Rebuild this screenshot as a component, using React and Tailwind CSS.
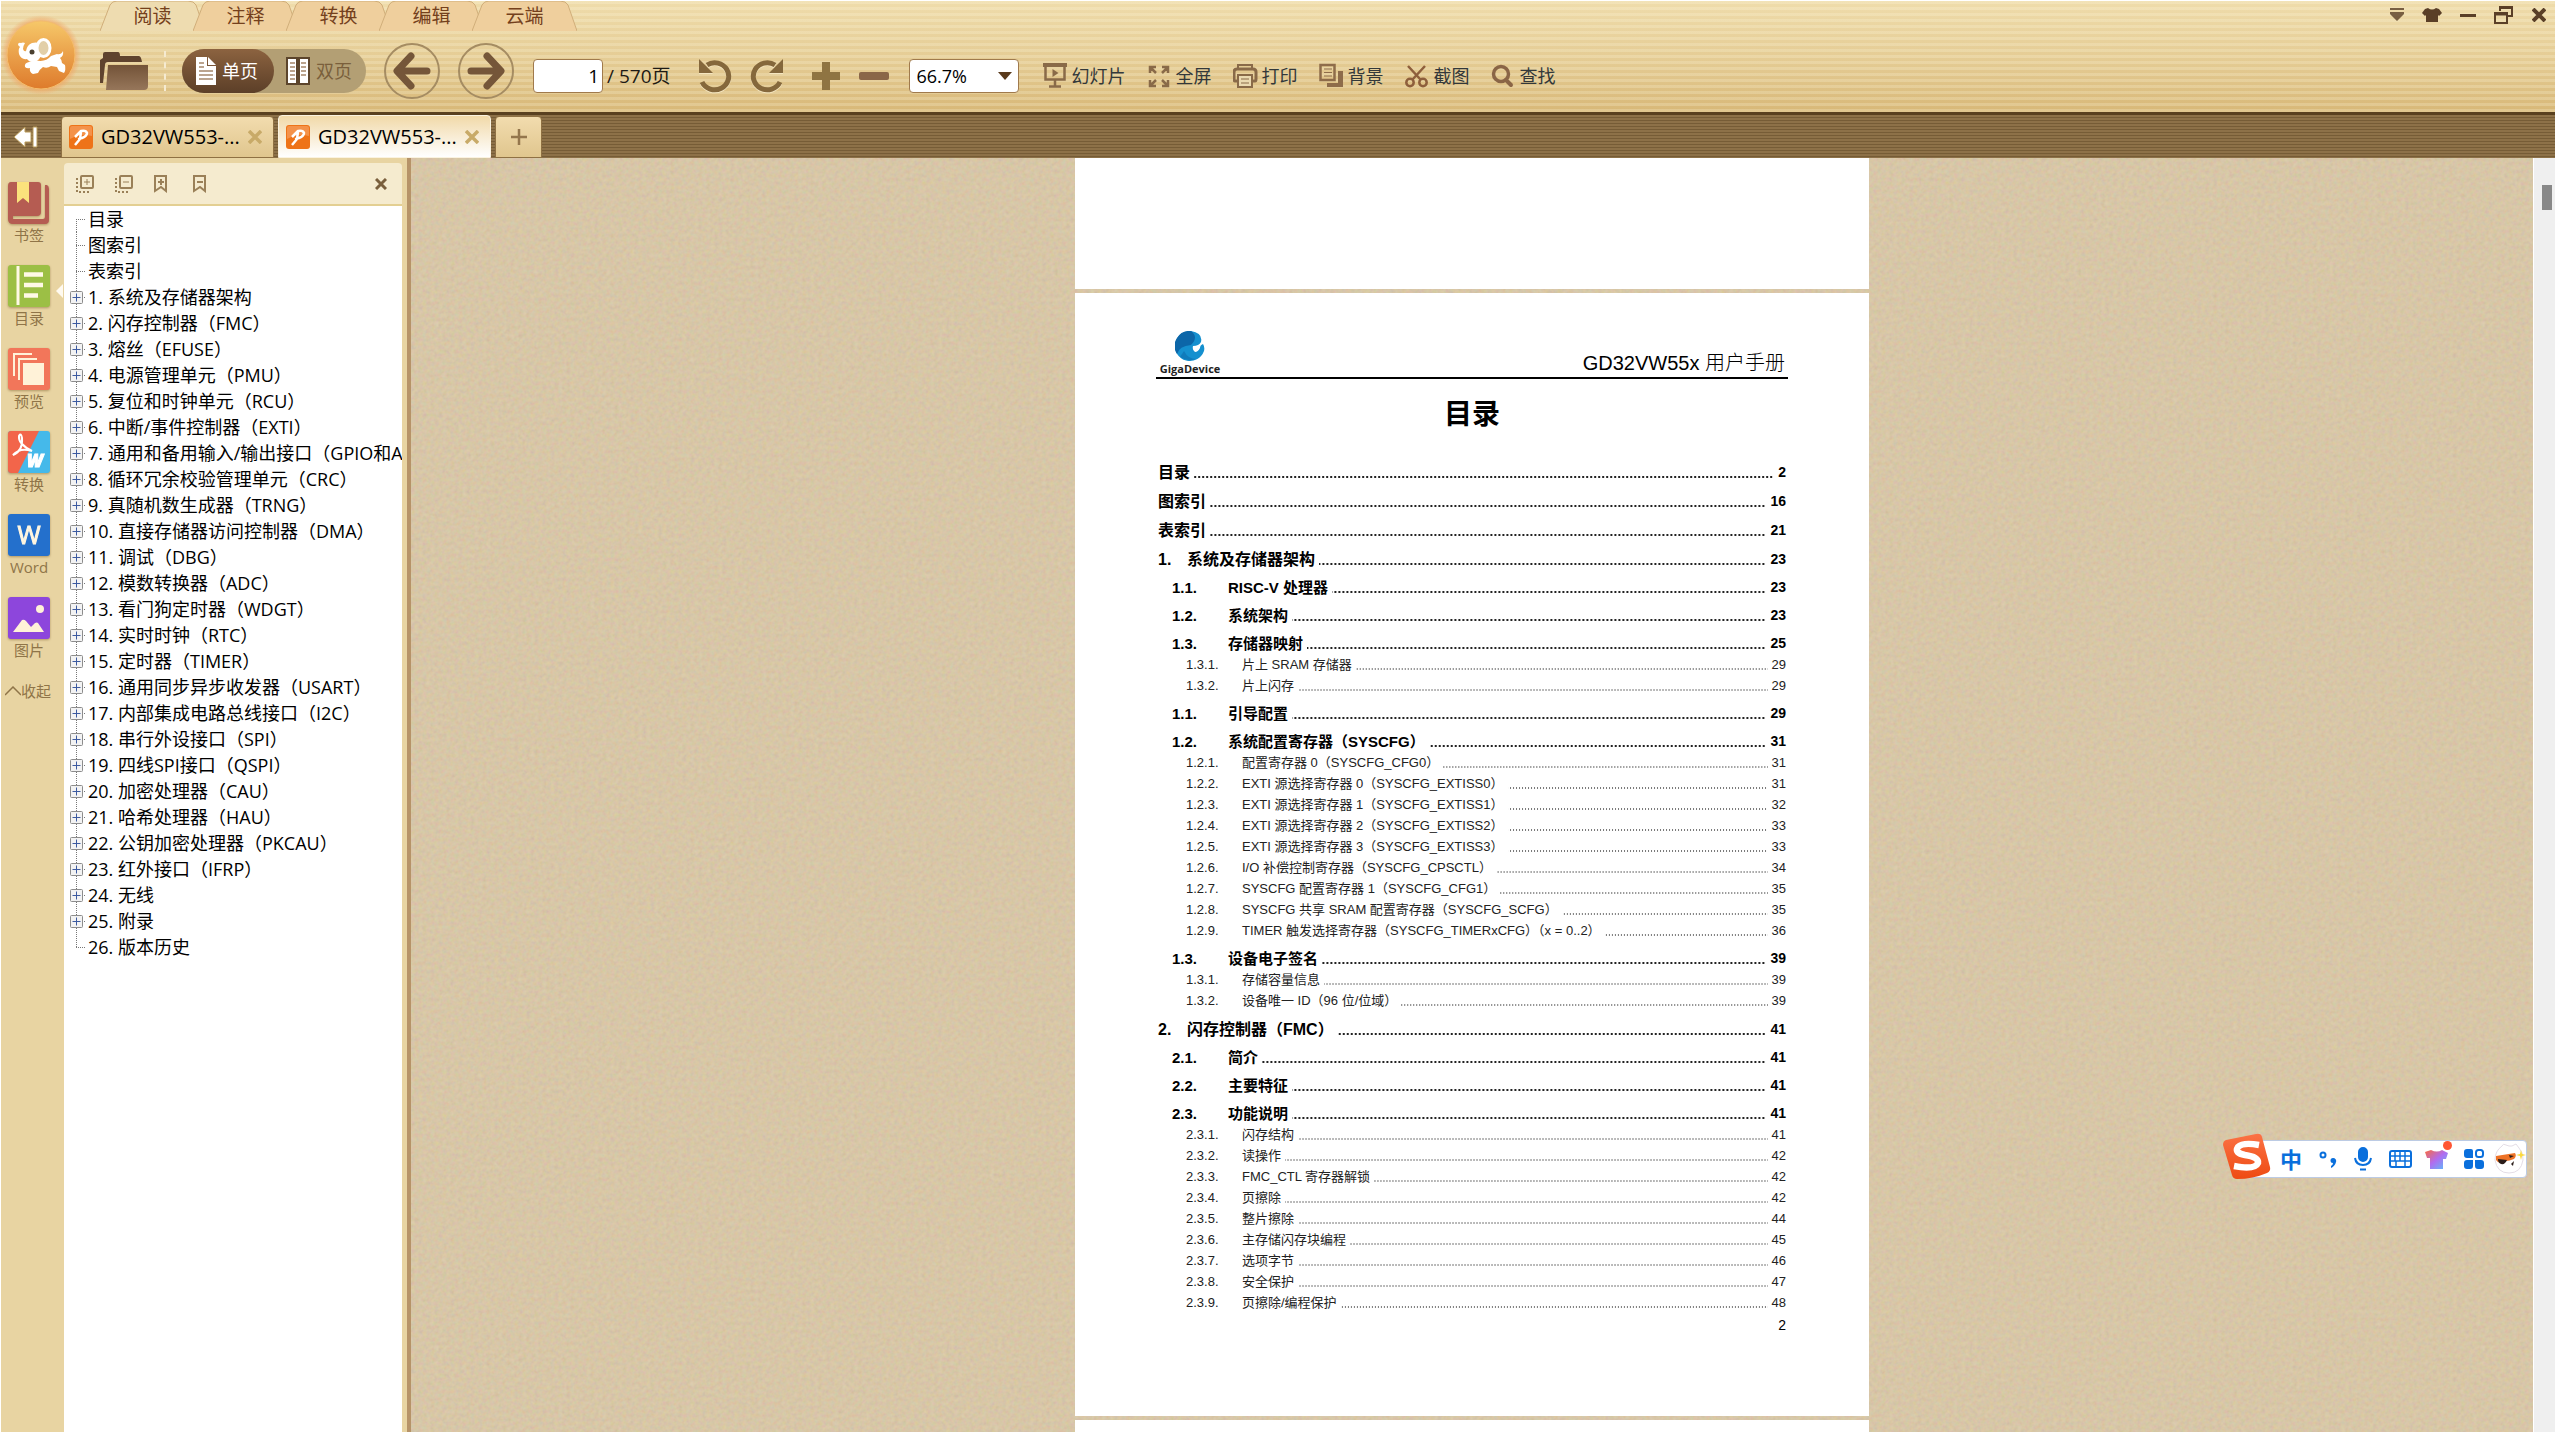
import clsx from 'clsx'

const ribbonTabs = ['阅读', '注释', '转换', '编辑', '云端']

const fileTabs = [
  { title: 'GD32VW553-...', active: false },
  { title: 'GD32VW553-...', active: true },
]

const outline = [
  '目录',
  '图索引',
  '表索引',
  '1. 系统及存储器架构',
  '2. 闪存控制器（FMC）',
  '3. 熔丝（EFUSE）',
  '4. 电源管理单元（PMU）',
  '5. 复位和时钟单元（RCU）',
  '6. 中断/事件控制器（EXTI）',
  '7. 通用和备用输入/输出接口（GPIO和A',
  '8. 循环冗余校验管理单元（CRC）',
  '9. 真随机数生成器（TRNG）',
  '10. 直接存储器访问控制器（DMA）',
  '11. 调试（DBG）',
  '12. 模数转换器（ADC）',
  '13. 看门狗定时器（WDGT）',
  '14. 实时时钟（RTC）',
  '15. 定时器（TIMER）',
  '16. 通用同步异步收发器（USART）',
  '17. 内部集成电路总线接口（I2C）',
  '18. 串行外设接口（SPI）',
  '19. 四线SPI接口（QSPI）',
  '20. 加密处理器（CAU）',
  '21. 哈希处理器（HAU）',
  '22. 公钥加密处理器（PKCAU）',
  '23. 红外接口（IFRP）',
  '24. 无线',
  '25. 附录',
  '26. 版本历史',
]

// [level, number, title, page]
const toc = [
  [1, '', '目录', 2],
  [1, '', '图索引', 16],
  [1, '', '表索引', 21],
  [1, '1.', '系统及存储器架构', 23],
  [2, '1.1.', 'RISC-V 处理器', 23],
  [2, '1.2.', '系统架构', 23],
  [2, '1.3.', '存储器映射', 25],
  [3, '1.3.1.', '片上 SRAM 存储器', 29],
  [3, '1.3.2.', '片上闪存', 29],
  [2, '1.1.', '引导配置', 29],
  [2, '1.2.', '系统配置寄存器（SYSCFG）', 31],
  [3, '1.2.1.', '配置寄存器 0（SYSCFG_CFG0）', 31],
  [3, '1.2.2.', 'EXTI 源选择寄存器 0（SYSCFG_EXTISS0）', 31],
  [3, '1.2.3.', 'EXTI 源选择寄存器 1（SYSCFG_EXTISS1）', 32],
  [3, '1.2.4.', 'EXTI 源选择寄存器 2（SYSCFG_EXTISS2）', 33],
  [3, '1.2.5.', 'EXTI 源选择寄存器 3（SYSCFG_EXTISS3）', 33],
  [3, '1.2.6.', 'I/O 补偿控制寄存器（SYSCFG_CPSCTL）', 34],
  [3, '1.2.7.', 'SYSCFG 配置寄存器 1（SYSCFG_CFG1）', 35],
  [3, '1.2.8.', 'SYSCFG 共享 SRAM 配置寄存器（SYSCFG_SCFG）', 35],
  [3, '1.2.9.', 'TIMER 触发选择寄存器（SYSCFG_TIMERxCFG）（x = 0..2）', 36],
  [2, '1.3.', '设备电子签名', 39],
  [3, '1.3.1.', '存储容量信息', 39],
  [3, '1.3.2.', '设备唯一 ID（96 位/位域）', 39],
  [1, '2.', '闪存控制器（FMC）', 41],
  [2, '2.1.', '简介', 41],
  [2, '2.2.', '主要特征', 41],
  [2, '2.3.', '功能说明', 41],
  [3, '2.3.1.', '闪存结构', 41],
  [3, '2.3.2.', '读操作', 42],
  [3, '2.3.3.', 'FMC_CTL 寄存器解锁', 42],
  [3, '2.3.4.', '页擦除', 42],
  [3, '2.3.5.', '整片擦除', 44],
  [3, '2.3.6.', '主存储闪存块编程', 45],
  [3, '2.3.7.', '选项字节', 46],
  [3, '2.3.8.', '安全保护', 47],
  [3, '2.3.9.', '页擦除/编程保护', 48],
]

function ElephantLogo() {
  return (
    <svg viewBox="0 0 80 80" className="size-20">
      <defs>
        <linearGradient id="ball" x1="0" y1="0" x2="0" y2="1">
          <stop offset="0" stopColor="#f6c869" />
          <stop offset="0.5" stopColor="#eaa04a" />
          <stop offset="1" stopColor="#de7b2c" />
        </linearGradient>
        <radialGradient id="glow">
          <stop offset="0.85" stopColor="#f0a868" stopOpacity="0.7" />
          <stop offset="1" stopColor="#f0a868" stopOpacity="0" />
        </radialGradient>
      </defs>
      <circle cx="40" cy="40" r="40" fill="url(#glow)" />
      <circle cx="40" cy="40" r="34" fill="url(#ball)" stroke="#f4bd6c" strokeWidth="1" />
      <path d="M34 45q10 3 16-4l6-2q4 1 6-3 1 5-3 7 2 2 2 5l3 2q1 5-1 8l-5-2-2-4-6-1q-4 3-8 1-3 2-5 6l-5 1q-4-2-3-6-3 1-5-1-1-4 4-5z" fill="#fff" />
      <path d="M17 30q0-3 3-2 2-1 4 0-2 3-2 6 1 3 3 2 1-6 6-8 4-1 7 0l2 12q-2 7-8 7-4 0-6-3-6 1-8-5-1-5 1-7z" fill="#fff" />
      <ellipse cx="42.500" cy="33" rx="6.500" ry="8.500" fill="#e2cfa8" stroke="#fff" strokeWidth="3" />
      <circle cx="31" cy="37" r="2.500" fill="#4a4030" />
    </svg>
  )
}

function FolderIcon() {
  return (
    <svg viewBox="0 0 48 40" className="h-10 w-12">
      <defs>
        <linearGradient id="folder" x1="0" y1="0" x2="0" y2="1">
          <stop offset="0" stopColor="#735338" />
          <stop offset="1" stopColor="#96765a" />
        </linearGradient>
      </defs>
      <path d="M0 32V9l3-2V3q0-2 2-2h13q2 0 2 4h19q2 0 3 6H8q-3 0-3 3L3 32z" fill="#5f432e" />
      <path d="M8 14h40v21q0 4-4 4H6z" fill="url(#folder)" />
    </svg>
  )
}

function RotateIcon({ flip }) {
  return (
    <svg viewBox="0 0 34 34" className="size-[34px] drop-shadow-[0_1px_0_#f5e6c0]">
      <g transform={flip ? 'matrix(-1 0 0 1 34 0)' : undefined}>
        <path d="M8 6a14 13.500 0 1 1-5 17" fill="none" stroke="#85683c" strokeWidth="5" />
        <path d="M0 0L14 14H0z" fill="#85683c" />
      </g>
    </svg>
  )
}

function ArrowButton({ flip, label }) {
  return (
    <button aria-label={label} className="size-14 rounded-full border-2 border-[#a58c62]">
      <svg viewBox="0 0 52 52" className="size-[52px]">
        <path d="M41 26H12M25 11L11 26l14 15" transform={flip ? 'matrix(-1 0 0 1 52 0)' : undefined} fill="none" stroke="#755639" strokeWidth="7" strokeLinecap="round" strokeLinejoin="round" />
      </svg>
    </button>
  )
}

const tools = [
  {
    name: '幻灯片',
    icon: (
      <g fill="none" stroke="#896a48" strokeWidth="2.500">
        <path d="M0 2h24" strokeWidth="4" />
        <path d="M2.500 3v13.500h19V3M12 17v6M6 23.500h12" />
        <path d="M9.500 6v8l6-4z" fill="#896a48" stroke="none" />
      </g>
    ),
  },
  {
    name: '全屏',
    icon: (
      <g fill="none" stroke="#896a48" strokeWidth="2.500">
        <path d="M3 10V4h6M3 4l6 6M15 4h6v6M21 4l-6 6M3 17v6h6M3 23l6-6M21 17v6h-6M21 23l-6-6" />
      </g>
    ),
  },
  {
    name: '打印',
    icon: (
      <g fill="none" stroke="#896a48" strokeWidth="2">
        <path d="M5 6V2h14v4" />
        <path d="M5 18H2q-1 0-1-2V9q0-3 3-3h16q3 0 3 3v7q0 2-1 2h-3" strokeWidth="3" />
        <path d="M5 12h14v12H5z" fill="#ead9b0" />
        <path d="M8 16h8M8 20h8" strokeWidth="1" />
      </g>
    ),
  },
  {
    name: '背景',
    icon: (
      <g fill="none" stroke="#8e6c4a" strokeWidth="2.500">
        <path d="M1.500 2h14v15h-14z" />
        <path d="M5 6h8M5 9.500h8M5 13h8" strokeWidth="1" />
        <path d="M19 8h5v16H8v-4h11z" fill="#8e6c4a" stroke="none" />
      </g>
    ),
  },
  {
    name: '截图',
    icon: (
      <g fill="none" stroke="#8e5f3c" strokeWidth="2.500">
        <circle cx="5" cy="19.500" r="3.700" />
        <circle cx="18" cy="19.500" r="3.700" />
        <path d="M3 3l12.500 13.500M20 3L7.500 16.500" />
      </g>
    ),
  },
  {
    name: '查找',
    icon: (
      <g fill="none" stroke="#8a6546">
        <circle cx="10" cy="11" r="7.500" strokeWidth="3.500" />
        <path d="M15 17l5 5" strokeWidth="4" strokeLinecap="round" />
      </g>
    ),
  },
]

function WindowControls() {
  return (
    <div className="flex h-7 items-center gap-[18px] pr-[9px] text-[#5a3f27]">
      <button aria-label="菜单">
        <svg viewBox="0 0 14 14" className="size-3.5" fill="currentColor">
          <path d="M0 0h14v2H0zM0 4h14v2l-7 7-7-7z" opacity="0.8" />
        </svg>
      </button>
      <button aria-label="皮肤">
        <svg viewBox="0 0 20 14" className="h-3.5 w-5" fill="currentColor">
          <path d="M6 0q4 3 8 0l3 1 3 4-3 3-1-1v7H4V7L3 8 0 5l3-4z" />
        </svg>
      </button>
      <button aria-label="最小化">
        <svg viewBox="0 0 16 20" className="h-5 w-4" fill="currentColor">
          <path d="M0 9h16v3H0z" />
        </svg>
      </button>
      <button aria-label="还原">
        <svg viewBox="0 0 20 20" className="size-5" fill="none" stroke="currentColor" strokeWidth="2">
          <path d="M6 6V2h12v9h-4M5 3h13M1 8h12v10H1zM1 9.500h12" />
        </svg>
      </button>
      <button aria-label="关闭">
        <svg viewBox="0 0 14 14" className="size-3.5" stroke="currentColor" strokeWidth="4">
          <path d="M1 1l12 12M13 1L1 13" />
        </svg>
      </button>
    </div>
  )
}

function Header() {
  return (
    <header className="flex h-28 border-t border-white bg-[repeating-linear-gradient(180deg,rgba(255,250,225,0.22)_0px,rgba(255,250,225,0.22)_3px,transparent_3px,transparent_6px),linear-gradient(180deg,#efdcab,#e4cb93_55%,#d8b878)]">
      <div className="w-[99px] shrink-0 pt-3.5">
        <ElephantLogo />
      </div>
      <div className="flex-1">
        <div className="flex justify-between">
          <nav className="flex h-[30px]">
            {ribbonTabs.map((name, i) => (
              <button key={name} className={clsx('relative w-[105px] text-[19px] leading-[30px] text-[#74401c]', i > 0 && '-ml-3')}>
                <svg viewBox="0 0 105 30" className="absolute inset-0 h-full w-full">
                  <path
                    d="M0 30L10 4Q12 0 17 0H88Q94 0 96 4L105 30"
                    fill={i === 0 ? '#eedcb0' : '#efcf9d'}
                    stroke="#d0ae7a"
                    strokeWidth="1"
                  />
                </svg>
                <span className="relative">{name}</span>
              </button>
            ))}
          </nav>
          <WindowControls />
        </div>

        <div className="flex h-20">
          <div className="flex items-center">
            <button aria-label="打开">
              <FolderIcon />
            </button>
            <div className="mx-4 h-10 border-l-2 border-dashed border-[#f5ead0]" />
            <div className="flex h-[44px] rounded-full bg-[#b39f74] text-lg">
              <button className="flex w-[92px] items-center gap-1.5 rounded-full bg-linear-to-b from-[#8c6340] to-[#5c3f28] pl-3.5 text-white">
                <svg viewBox="0 0 20 28" className="h-7 w-5">
                  <path d="M0 0h11v9h9v19H0zM12 0l8 8h-8z" fill="#fff" />
                  <path d="M3 6h5M3 10h5M3 14h14M3 18h14M3 22h14" stroke="#a5876a" strokeWidth="1.500" />
                </svg>
                单页
              </button>
              <button className="flex w-[92px] items-center gap-1.5 pl-3 text-[#7a5f3c]">
                <svg viewBox="0 0 24 28" className="h-7 w-6">
                  <path d="M1 1h10v26H1zM13 1h10v26H13z" fill="#fff" stroke="#5c452c" strokeWidth="2" />
                  <path d="M4 6h5M4 10h5M4 14h5M4 18h5M4 22h5M15 6h5M15 10h5M15 14h5M15 18h5" stroke="#a5876a" strokeWidth="1.500" />
                </svg>
                双页
              </button>
            </div>
            <div className="ml-[18px] flex gap-[18px]">
              <ArrowButton label="上一页" />
              <ArrowButton flip label="下一页" />
            </div>
          </div>

          <div className="flex items-center pt-2.5 pl-[19px]">
            <input aria-label="页码" defaultValue="1" className="h-[34px] w-[70px] rounded border border-[#a07a4c] bg-white pr-[3px] text-right text-[19px] text-black" />
            <span className="pl-1 text-[19px] text-[#1d1a14]">/ 570页</span>
            <div className="ml-7 flex gap-4">
              <button aria-label="向左旋转"><RotateIcon /></button>
              <button aria-label="向右旋转"><RotateIcon flip /></button>
            </div>
            <div className="ml-7 flex gap-[18px]">
              <button aria-label="放大">
                <svg viewBox="0 0 30 30" className="size-[30px]" stroke="#8f7442" strokeWidth="8">
                  <path d="M15 1v28M1 15h28" />
                </svg>
              </button>
              <button aria-label="缩小">
                <svg viewBox="0 0 30 30" className="size-[30px]">
                  <rect x="0" y="11" width="30" height="8" rx="2" fill="#8a6648" />
                </svg>
              </button>
            </div>
            <div className="relative ml-5">
              <select aria-label="缩放比例" className="h-[34px] w-[110px] appearance-none rounded border border-[#a07a4c] bg-white pl-[7px] text-lg leading-none text-black">
                <option>66.7%</option>
              </select>
              <svg viewBox="0 0 14 8" className="pointer-events-none absolute top-[13px] right-[7px] h-2 w-3.5" fill="#5a3a1c">
                <path d="M0 0h14L7 8z" />
              </svg>
            </div>
            <div className="ml-6 flex gap-[21px] text-lg text-[#33383a]">
              {tools.map((tool) => (
                <button key={tool.name} className="flex items-center gap-1">
                  <svg viewBox="0 0 25 26" className="h-[26px] w-[25px]">{tool.icon}</svg>
                  {tool.name}
                </button>
              ))}
            </div>
          </div>
        </div>
      </div>
    </header>
  )
}

function FileTabs() {
  return (
    <div className="flex h-[46px] items-end border-t-[3px] border-[#59401f] bg-[repeating-linear-gradient(180deg,#8d7148_0px,#8d7148_2px,#765c36_2px,#765c36_3px)]">
      <button aria-label="折叠侧栏" className="flex h-full w-[60px] items-center pl-[13px]">
        <svg viewBox="0 0 24 22" className="h-[22px] w-6" fill="#fff" stroke="#b99a58" strokeWidth="1">
          <path d="M0 11L11 1v5h6v10h-6v5zM19 1h4v20h-4z" />
        </svg>
      </button>
      {fileTabs.map((tab, i) => (
        <div
          key={i}
          className={clsx(
            'mr-1 flex w-[213px] items-center rounded-t border pl-[7px]',
            tab.active ? 'h-[43px] border-[#fbf3e0] bg-linear-to-b from-[#f1d9a8] to-white' : 'h-[42px] border-[#8f7143] bg-linear-to-b from-[#f2dcae] to-[#e0c68e]'
          )}
        >
          <svg viewBox="0 0 24 24" className="size-6 shrink-0">
            <rect width="24" height="24" rx="3" fill="#ee7318" />
            <path d="M1 3q0-2 2-2h18q2 0 2 2v8Q12 8 1 14z" fill="#f4924a" />
            <path d="M6 12l6-6q5-1 6 2 0 3-5 5l-4 1M12 7l-1 7-5 6" fill="none" stroke="#fff" strokeWidth="2.500" strokeLinejoin="round" />
          </svg>
          <span className="w-[150px] pl-2 text-xl whitespace-nowrap text-black">{tab.title}</span>
          <button aria-label="关闭标签">
            <svg viewBox="0 0 14 14" className="ml-[5px] size-3.5" stroke="#c8aa68" strokeWidth="3.500">
              <path d="M1 1l12 12M13 1L1 13" />
            </svg>
          </button>
        </div>
      ))}
      <button aria-label="新建标签" className="flex h-[42px] w-[47px] items-center justify-center rounded-t border border-[#8f7143] bg-linear-to-b from-[#f2dcae] to-[#e0c68e]">
        <svg viewBox="0 0 16 16" className="size-4" stroke="#94764c" strokeWidth="2.500">
          <path d="M8 0v16M0 8h16" />
        </svg>
      </button>
    </div>
  )
}

const railItems = [
  {
    name: '书签',
    icon: (
      <>
        <path d="M3 0h27q3 0 3 3v27q0 4-4 4H5v3h30q2 0 2-2V3h2q2 1 2 4v31q0 4-4 4H5q-5 0-5-5V4q0-4 3-4z" fill="#b55c52" />
        <path d="M9 0h12v21l-6-5-6 5z" fill="#fbe27c" />
      </>
    ),
  },
  {
    name: '目录',
    icon: (
      <>
        <rect width="42" height="42" rx="3" fill="#9cbf45" />
        <path d="M10 1v39" stroke="#fff9e6" strokeWidth="3" />
        <path d="M16 9.500h19M16 20h19M16 30.500h14" stroke="#fff9e6" strokeWidth="4.500" />
      </>
    ),
  },
  {
    name: '预览',
    icon: (
      <>
        <rect width="42" height="42" rx="3" fill="#f2765a" />
        <path d="M6 28V6h18M11 32V11h18" fill="none" stroke="#fff2d8" strokeWidth="2" />
        <rect x="15" y="15" width="21" height="22" fill="#fff2d8" />
      </>
    ),
  },
  {
    name: '转换',
    icon: (
      <>
        <rect width="42" height="42" rx="3" fill="#45b9ea" />
        <path d="M3 0h28L10 42H3q-3 0-3-3V3q0-3 3-3z" fill="#f2654a" />
        <path d="M5 24q10-4 9-17-1-6-3-2-1 8 13 15-12-4-19 4z" fill="none" stroke="#fff" strokeWidth="2" />
        <text x="27" y="36" textAnchor="middle" fontSize="17" fontWeight="800" fontStyle="italic" fill="#fff" stroke="#fff" strokeWidth="1">W</text>
      </>
    ),
  },
  {
    name: 'Word',
    icon: (
      <>
        <rect width="42" height="42" rx="3" fill="#2470cc" />
        <text x="21" y="30" textAnchor="middle" fontSize="25" fill="#fff6e0" stroke="#fff6e0" strokeWidth="1">W</text>
      </>
    ),
  },
  {
    name: '图片',
    icon: (
      <>
        <rect width="42" height="42" rx="3" fill="#8d46dc" />
        <circle cx="32" cy="12" r="4" fill="#fff2d8" />
        <path d="M5 35L14 23q2-1 4 1l5 6 4-4q2-1 3 0l6 9z" fill="#fff2d8" />
      </>
    ),
  },
]

function Rail() {
  return (
    <nav className="relative flex w-[62px] shrink-0 flex-col gap-[19px] bg-[#e8d4a2] pt-6 text-[15px] text-[#8f7448]">
      {railItems.map((item) => (
        <button key={item.name} className="ml-[7px] w-[42px]">
          <svg viewBox="0 0 42 42" className="size-[42px] drop-shadow-[0_1px_1px_rgba(120,90,40,0.5)]">{item.icon}</svg>
          <span className="flex h-[22px] items-center justify-center leading-5">{item.name}</span>
        </button>
      ))}
      <button className="ml-1 flex h-[22px] items-center">
        <svg viewBox="0 0 16 10" className="h-2.5 w-4" fill="none" stroke="#8f7448" strokeWidth="1.500">
          <path d="M0 9l8-8 8 8" />
        </svg>
        收起
      </button>
      <svg viewBox="0 0 7 14" className="absolute top-[126px] right-0 h-3.5 w-[7px]">
        <path d="M7 0v14L0 7z" fill="#fffaf0" />
      </svg>
    </nav>
  )
}

function PanelToolbar() {
  return (
    <div className="mt-[5px] flex h-[43px] shrink-0 items-center gap-[21px] rounded-t border-b-2 border-[#e3cf92] bg-[#f5ebcf] pr-[15px] pl-3 text-[#9a8058]">
      <button aria-label="全部展开">
        <svg viewBox="0 0 18 18" className="size-[18px]" fill="none" stroke="currentColor" strokeWidth="2">
          <rect x="5" y="1" width="12" height="12" rx="1" />
          <path d="M8 7h6M11 4v6" strokeWidth="1" />
          <path d="M1 3v14h13" strokeDasharray="2 2" />
        </svg>
      </button>
      <button aria-label="全部折叠">
        <svg viewBox="0 0 18 18" className="size-[18px]" fill="none" stroke="currentColor" strokeWidth="2">
          <rect x="5" y="1" width="12" height="12" rx="1" />
          <path d="M8 7h6" strokeWidth="1" />
          <path d="M1 3v14h13" strokeDasharray="2 2" />
        </svg>
      </button>
      <button aria-label="添加书签">
        <svg viewBox="0 0 18 18" className="size-[18px]" fill="none" stroke="currentColor" strokeWidth="2">
          <path d="M1 1h11v15l-5-4-6 4zM4 7h6M7 4v6" />
        </svg>
      </button>
      <button aria-label="删除书签">
        <svg viewBox="0 0 18 18" className="size-[18px]" fill="none" stroke="currentColor" strokeWidth="2">
          <path d="M1 1h11v15l-5-4-6 4zM4 7h6" />
        </svg>
      </button>
      <button aria-label="关闭面板" className="ml-auto">
        <svg viewBox="0 0 12 12" className="size-3" stroke="#7a5f3c" strokeWidth="3">
          <path d="M1 1l10 10M11 1L1 11" />
        </svg>
      </button>
    </div>
  )
}

function OutlineMark({ leaf, first, last }) {
  return (
    <svg viewBox="0 0 18 26" className="h-[26px] w-[18px] shrink-0">
      <path d={`M6.5 ${first ? 13 : 0}V${last ? 14 : 26}M6 13.500H16`} fill="none" stroke="#777" strokeDasharray="1 1" />
      {!leaf && (
        <>
          <rect x="0.500" y="7.500" width="12" height="12" rx="1" fill="#f3f3f3" stroke="#8c8c8c" />
          <path d="M2.500 13.500h8M6.500 9.500v8" stroke="#3c5aa0" />
        </>
      )}
    </svg>
  )
}

function OutlinePanel() {
  return (
    <aside className="flex w-[344px] shrink-0 flex-col border-x border-r-[5px] border-[#e8d4a2] bg-[#e8d4a2]">
      <PanelToolbar />
      <ul className="flex-1 overflow-hidden bg-white text-lg text-black">
        {outline.map((title, i) => (
          <li key={title} className="flex h-[26px] items-center pl-1.5 leading-[26px] whitespace-nowrap">
            <OutlineMark leaf={i < 3 || i === outline.length - 1} first={i === 0} last={i === outline.length - 1} />
            {title}
          </li>
        ))}
      </ul>
    </aside>
  )
}

function TocRow({ row }) {
  const [level, number, title, page] = row
  return (
    <li
      className={clsx(
        'flex items-end leading-[21px] whitespace-nowrap',
        level === 1 && 'h-[29px] text-base font-bold',
        level === 2 && 'h-7 pl-[14px] text-[15px] font-bold',
        level === 3 && 'h-[21px] pl-7 text-[13px] text-[#222]'
      )}
    >
      {number && <span className={clsx('shrink-0', level === 1 ? 'w-[29px]' : 'w-14')}>{number}</span>}
      <span>{title}</span>
      <span
        className={clsx(
          'mb-[5px] ml-1 h-0.5 flex-1 bg-right',
          level < 3
            ? 'bg-[linear-gradient(90deg,#222_2px,transparent_2px)] bg-size-[4px_2px]'
            : 'bg-[linear-gradient(90deg,#777_1px,transparent_1px)] bg-size-[3px_2px]'
        )}
      />
      <span className={clsx('pl-1', level < 3 && 'text-sm leading-[21px]')}>{page}</span>
    </li>
  )
}

function GigaDeviceLogo() {
  return (
    <div className="ml-1 flex w-[60px] flex-col items-center">
      <svg viewBox="0 0 30 30" className="size-[30px]">
        <path d="M16 0A15 15 0 1 0 29 20q1-4-1-7-3 1-3 4-2 4-5 4-3-2-2-6 6 0 8-4 2-9-10-11z" fill="#1590cf" />
        <path d="M16 0A15 15 0 0 0 2 23q2-8 14-9Q24 6 16 0z" fill="#0c66a8" />
        <path d="M5 26q8 5 16 2-8 0-12-8z" fill="#0c66a8" opacity="0.5" />
      </svg>
      <span className="font-['Open_Sans',sans-serif] text-[11px] leading-4 font-bold text-[#222]">GigaDevice</span>
    </div>
  )
}

function DocumentPage() {
  return (
    <article className="min-h-[1123px] w-[794px] shrink-0 bg-white font-['Liberation_Sans','Noto_Sans_CJK_SC',sans-serif] text-black">
      <div className="mx-[81px] flex h-[86px] items-end justify-between border-b-2 border-black">
        <GigaDeviceLogo />
        <span className="pr-[3px] pb-0.5 text-xl leading-6 font-light">GD32VW55x 用户手册</span>
      </div>
      <h1 className="mt-[18px] text-center text-[28px] leading-9 font-bold">目录</h1>
      <ol className="mx-[83px] mt-[21px]">
        {toc.map((row, i) => (
          <TocRow key={i} row={row} />
        ))}
      </ol>
      <div className="mx-[83px] mt-0.5 text-right text-sm leading-[21px]">2</div>
    </article>
  )
}

function Viewer() {
  return (
    <main className="relative flex min-w-0 flex-1 flex-col items-center gap-1 overflow-hidden bg-[#d9c6a4]">
      <svg aria-hidden="true" className="absolute inset-0 h-full w-full opacity-15">
        <filter id="paper">
          <feTurbulence type="fractalNoise" baseFrequency="0.25" numOctaves="2" stitchTiles="stitch" />
          <feColorMatrix values="1 0 0 0 0.15  0 1 0 0 0.1  0 0 1 0 0  0 0 0 0 1" />
        </filter>
        <rect width="100%" height="100%" filter="url(#paper)" />
      </svg>
      <div className="relative h-[131px] w-[794px] shrink-0 bg-white" />
      <div className="relative">
        <DocumentPage />
      </div>
      <div className="relative w-[794px] flex-1 bg-white" />
    </main>
  )
}

function ImeBar() {
  return (
    <div className="absolute right-7 bottom-[254px] flex h-[38px] w-[287px] items-center rounded border border-[#bccbe4] bg-white pl-[39px] text-[#0a6fdc]">
      <svg viewBox="0 0 48 46" className="absolute -top-2 -left-[18px] h-[46px] w-12">
        <defs>
          <linearGradient id="sogou" x1="0" y1="0" x2="0" y2="1">
            <stop offset="0" stopColor="#fb7245" />
            <stop offset="1" stopColor="#ee4a12" />
          </linearGradient>
        </defs>
        <path d="M3 7L33 1q5-1 6 3l8 30q1 4-3 6-14 6-30 6-4 0-5-4L0 12q0-4 3-5z" fill="url(#sogou)" />
        <path d="M36 12q-16-3-21 2-4 6 7 8 14 2 13 8-3 7-24 3" fill="none" stroke="#fff" strokeWidth="6.500" />
      </svg>
      <button className="w-[22px] text-[22px] leading-none font-bold">中</button>
      <button aria-label="标点" className="ml-[17px]">
        <svg viewBox="0 0 18 18" className="size-[18px]">
          <circle cx="4" cy="5" r="2.500" fill="none" stroke="currentColor" strokeWidth="2" />
          <path d="M14 8a3 3 0 0 1 3 4q-1 4-5 6v-2q2-1 2-3a2.500 2.500 0 0 1 0-5z" fill="currentColor" />
        </svg>
      </button>
      <button aria-label="语音" className="ml-[17px]">
        <svg viewBox="0 0 18 24" className="h-6 w-[18px]" fill="none" stroke="currentColor" strokeWidth="2">
          <rect x="5" y="1" width="8" height="13" rx="4" fill="currentColor" />
          <path d="M1 11q1 7 8 7t8-7M6 22.500h6" />
        </svg>
      </button>
      <button aria-label="键盘" className="ml-[17px]">
        <svg viewBox="0 0 23 18" className="h-[18px] w-[23px]" fill="none" stroke="currentColor" strokeWidth="2">
          <rect x="1" y="1" width="21" height="16" rx="2" />
          <path d="M2 6h19M2 11h19M6 2v9M11 2v9M16 2v9M7 11v6M16 11v6" strokeWidth="1.500" />
        </svg>
      </button>
      <button aria-label="皮肤" className="relative ml-[13px]">
        <svg viewBox="0 0 23 20" className="h-5 w-[23px]">
          <defs>
            <linearGradient id="shirt" x1="0" y1="0" x2="1" y2="1">
              <stop offset="0" stopColor="#fb6a3c" />
              <stop offset="0.5" stopColor="#b06cf0" />
              <stop offset="1" stopColor="#54c4fb" />
            </linearGradient>
          </defs>
          <path d="M6 1q6 3 11 0l6 3-2 6h-3v10H5V9H2L0 3z" fill="url(#shirt)" />
        </svg>
        <span className="absolute -top-2 -right-1 size-[9px] rounded-full bg-[#ff5533]" />
      </button>
      <button aria-label="工具箱" className="ml-4">
        <svg viewBox="0 0 20 20" className="size-5" fill="currentColor">
          <path d="M3 0h4q2 0 2 2v7H3q-3 0-3-3V3q0-3 3-3zM3 11h6v6q0 3-3 3H3q-3 0-3-3v-3q0-3 3-3zM11 11h6q3 0 3 3v3q0 3-3 3h-3q-3 0-3-3z" />
          <rect x="12" y="1" width="7" height="7" rx="2.500" fill="none" stroke="currentColor" strokeWidth="2" />
        </svg>
      </button>
      <button aria-label="助手" className="ml-2.5">
        <svg viewBox="0 0 32 32" className="size-8">
          <path d="M8 3q1-3 4-1l3 1h3l4-2 3 4q5 5 4 12-2 13-14 13T1 17Q1 8 8 3z" fill="#fff" stroke="#e4dde6" />
          <path d="M2 13l19-3q2 3-1 6-5 2-8 2-7 4-10-1z" fill="#ee7226" />
          <path d="M4 16l9 1q-2 5-6 4-3-1-3-5zM15 12l5 1-4 2zM17 21l3-3-1 5z" fill="#2a1c18" />
          <path d="M27 7l1 4 4 1-4 1-1 4-1-4-4-1 4-1z" fill="#fbd93c" />
        </svg>
      </button>
    </div>
  )
}

export default function App() {
  return (
    <div className="relative flex h-screen flex-col overflow-hidden border-l border-white font-['Open_Sans','Noto_Sans_CJK_SC',sans-serif]">
      <Header />
      <FileTabs />
      <div className="flex min-h-0 flex-1">
        <Rail />
        <OutlinePanel />
        <div className="w-1 shrink-0 bg-[#b69368]" />
        <Viewer />
        <div className="w-[22px] shrink-0 border-l border-white bg-[#efefef] pt-[27px] pl-2">
          <div className="h-[25px] w-2.5 bg-[#888]" />
        </div>
      </div>
      <ImeBar />
    </div>
  )
}
